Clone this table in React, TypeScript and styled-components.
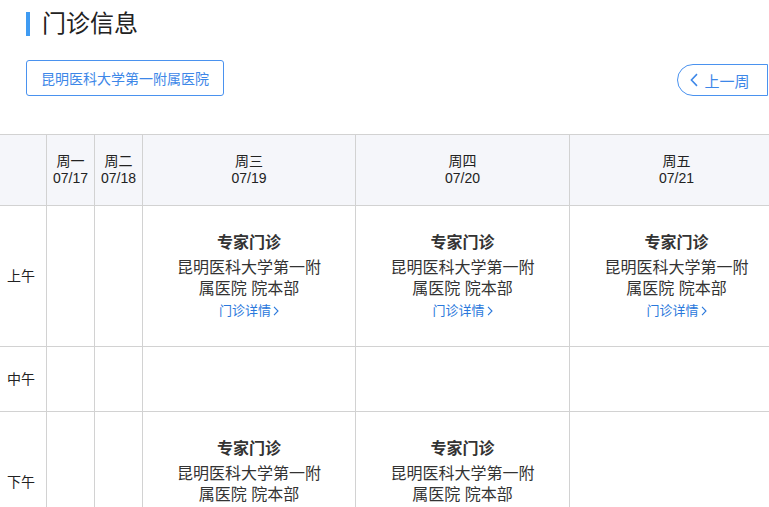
import React from "react";
import styled, { createGlobalStyle } from "styled-components";

const GlobalStyle = createGlobalStyle`
  html, body { margin: 0; padding: 0; overflow: hidden; background: #fff; }
  body { font-family: "Liberation Sans", "Noto Sans CJK SC", sans-serif; color: #333; }
`;

const Page = styled.div`
  width: 769px;
  overflow: hidden;
`;

const TitleRow = styled.div`
  display: flex;
  align-items: center;
  gap: 12px;
  padding: 10px 0 0 26px;
`;

const TitleBar = styled.span`
  width: 4px;
  height: 24px;
  background: #3f9bf2;
`;

const Title = styled.h1`
  margin: 0;
  font-size: 24px;
  line-height: 28px;
  font-weight: 400;
  color: #222;
`;

const Toolbar = styled.div`
  display: flex;
  align-items: flex-end;
  justify-content: space-between;
  margin-top: 22px;
  padding-left: 26px;
  padding-right: 1px;
`;

const HospitalButton = styled.button`
  height: 36px;
  width: 198px;
  border: 1px solid #4a92ef;
  border-radius: 3px;
  background: #fff;
  color: #3d87e8;
  font-family: inherit;
  font-size: 14px;
  padding: 0;
`;

const WeekButton = styled.button`
  display: flex;
  align-items: center;
  gap: 6px;
  height: 32px;
  width: 91px;
  padding: 0 0 0 12px;
  border: 1px solid #4a92ef;
  border-radius: 16px 0 0 16px;
  background: #fff;
  color: #3d87e8;
  font-family: inherit;
  font-size: 15px;
`;

const Grid = styled.div`
  margin-top: 38px;
  display: grid;
  grid-template-columns: 47px 48px 48px 213px 214px 214px 48px 48px;
  grid-template-rows: 71px 141px 65px 141px;
  width: max-content;
  border-top: 1px solid #d2d2d2;
`;

const Cell = styled.div<{ $head?: boolean }>`
  border-right: 1px solid #d2d2d2;
  border-bottom: 1px solid #d2d2d2;
  background: ${(p) => (p.$head ? "#f5f6fa" : "#fff")};
  display: flex;
  flex-direction: column;
  align-items: center;
  justify-content: center;
  text-align: center;
`;

const HeadText = styled.div`
  font-size: 14px;
  line-height: 17px;
  color: #222;
`;

const RowLabel = styled.div`
  font-size: 14px;
  line-height: 17px;
  color: #222;
  padding-right: 4px;
`;

const Clinic = styled.div`
  width: 152px;
  display: flex;
  flex-direction: column;
  align-items: center;
`;

const ClinicTitle = styled.div`
  font-size: 16px;
  font-weight: 700;
  line-height: 24px;
  color: #333;
  margin-bottom: 2px;
`;

const ClinicAddr = styled.div`
  font-size: 16px;
  line-height: 21px;
  color: #333;
`;

const DetailLink = styled.a`
  display: flex;
  align-items: center;
  gap: 2px;
  margin-top: 2px;
  font-size: 13px;
  line-height: 20px;
  color: #2a78dc;
  text-decoration: none;
  cursor: pointer;
`;

const Chevron = ({ dir, size = 10 }: { dir: "left" | "right"; size?: number }) => (
  <svg width={size * 0.6} height={size} viewBox="0 0 6 10" fill="none">
    <polyline
      points={dir === "left" ? "5,0.8 1,5 5,9.2" : "1,0.8 5,5 1,9.2"}
      stroke="currentColor"
      strokeWidth="1.1"
    />
  </svg>
);

const days = [
  { name: "周一", date: "07/17" },
  { name: "周二", date: "07/18" },
  { name: "周三", date: "07/19" },
  { name: "周四", date: "07/20" },
  { name: "周五", date: "07/21" },
  { name: "周六", date: "07/22" },
  { name: "周日", date: "07/23" },
];

const periods = ["上午", "中午", "下午"];

const schedule: Record<string, number[]> = {
  上午: [2, 3, 4],
  中午: [],
  下午: [2, 3],
};

const ClinicCard = () => (
  <Clinic>
    <ClinicTitle>专家门诊</ClinicTitle>
    <ClinicAddr>昆明医科大学第一附属医院 院本部</ClinicAddr>
    <DetailLink>
      门诊详情
      <Chevron dir="right" size={10} />
    </DetailLink>
  </Clinic>
);

export default function App() {
  return (
    <Page>
      <GlobalStyle />
      <TitleRow>
        <TitleBar />
        <Title>门诊信息</Title>
      </TitleRow>
      <Toolbar>
        <HospitalButton>昆明医科大学第一附属医院</HospitalButton>
        <WeekButton>
          <Chevron dir="left" size={14} />
          上一周
        </WeekButton>
      </Toolbar>
      <Grid>
        <Cell $head />
        {days.map((d) => (
          <Cell $head key={d.name}>
            <HeadText>{d.name}</HeadText>
            <HeadText>{d.date}</HeadText>
          </Cell>
        ))}
        {periods.map((p) => (
          <React.Fragment key={p}>
            <Cell>
              <RowLabel>{p}</RowLabel>
            </Cell>
            {days.map((d, i) => (
              <Cell key={d.name}>{schedule[p].includes(i) ? <ClinicCard /> : null}</Cell>
            ))}
          </React.Fragment>
        ))}
      </Grid>
    </Page>
  );
}
